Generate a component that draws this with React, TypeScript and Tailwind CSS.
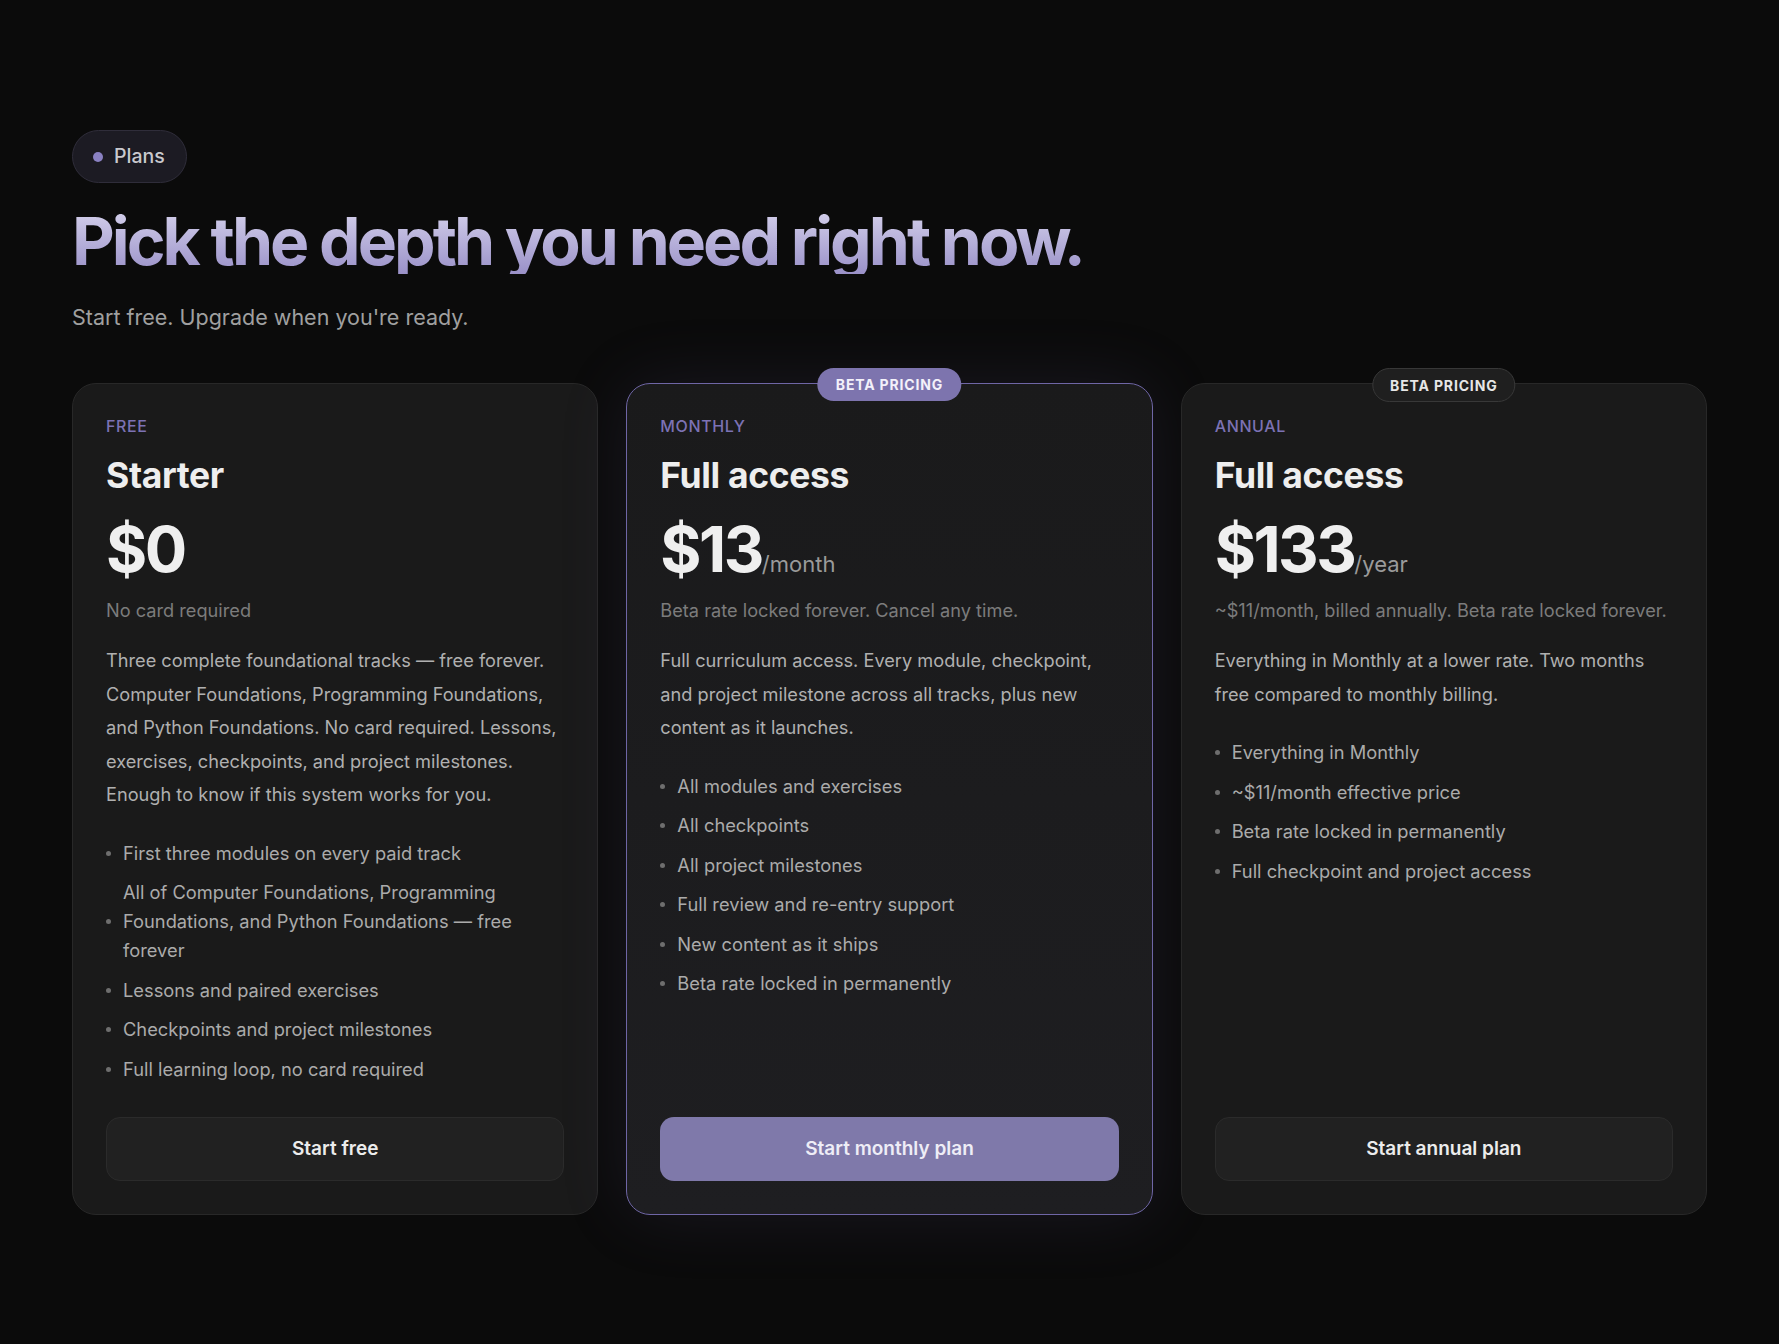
import React from "react";

type Plan = {
  label: string;
  title: string;
  price: string;
  suffix?: string;
  sub: string;
  desc: string;
  bullets: string[];
  cta: string;
  featured: boolean;
  badge: "primary" | "muted" | null;
};

const plans: Plan[] = [
  {
    label: "FREE",
    title: "Starter",
    price: "$0",
    sub: "No card required",
    desc:
      "Three complete foundational tracks — free forever. Computer Foundations, Programming Foundations, and Python Foundations. No card required. Lessons, exercises, checkpoints, and project milestones. Enough to know if this system works for you.",
    bullets: [
      "First three modules on every paid track",
      "All of Computer Foundations, Programming Foundations, and Python Foundations — free forever",
      "Lessons and paired exercises",
      "Checkpoints and project milestones",
      "Full learning loop, no card required",
    ],
    cta: "Start free",
    featured: false,
    badge: null,
  },
  {
    label: "MONTHLY",
    title: "Full access",
    price: "$13",
    suffix: "/month",
    sub: "Beta rate locked forever. Cancel any time.",
    desc:
      "Full curriculum access. Every module, checkpoint, and project milestone across all tracks, plus new content as it launches.",
    bullets: [
      "All modules and exercises",
      "All checkpoints",
      "All project milestones",
      "Full review and re-entry support",
      "New content as it ships",
      "Beta rate locked in permanently",
    ],
    cta: "Start monthly plan",
    featured: true,
    badge: "primary",
  },
  {
    label: "ANNUAL",
    title: "Full access",
    price: "$133",
    suffix: "/year",
    sub: "~$11/month, billed annually. Beta rate locked forever.",
    desc:
      "Everything in Monthly at a lower rate. Two months free compared to monthly billing.",
    bullets: [
      "Everything in Monthly",
      "~$11/month effective price",
      "Beta rate locked in permanently",
      "Full checkpoint and project access",
    ],
    cta: "Start annual plan",
    featured: false,
    badge: "muted",
  },
];

function Card({ plan }: { plan: Plan }) {
  return (
    <div
      className={
        plan.featured
          ? "relative flex flex-col rounded-[24px] border border-[#6f66a6] bg-gradient-to-b from-[#1a1a1b] to-[#1e1e21] px-[33px] pt-[32px] pb-[33px] shadow-[0_0_70px_rgba(120,110,180,0.13)]"
          : "relative flex flex-col rounded-[24px] border border-[#282828] bg-[#1a1a1a] px-[33px] pt-[32px] pb-[33px]"
      }
    >
      {plan.badge === "primary" && (
        <div className="absolute left-1/2 top-[-16px] flex h-[33px] -translate-x-1/2 items-center rounded-full bg-[#7d74ae] px-[18px] text-[14px] font-bold tracking-[0.06em] text-[#f3f1fa]">
          BETA PRICING
        </div>
      )}
      {plan.badge === "muted" && (
        <div className="absolute left-1/2 top-[-16px] flex h-[34px] -translate-x-1/2 items-center rounded-full border border-[#383838] bg-[#1f1f1f] px-[17px] text-[14px] font-bold tracking-[0.06em] text-[#e6e6e6]">
          BETA PRICING
        </div>
      )}
      <div className="text-[16px] font-medium leading-[20px] tracking-[0.04em] text-[#7c72b4]">
        {plan.label}
      </div>
      <div className="mt-[19px] text-[35.5px] font-bold leading-[42px] tracking-[-0.01em] text-[#eeeeee]">
        {plan.title}
      </div>
      <div className="mt-[21px] flex items-baseline">
        <span className="text-[63px] font-bold leading-[63px] tracking-[-0.04em] text-[#efefef]">
          {plan.price}
        </span>
        {plan.suffix && (
          <span className="text-[22px] font-normal leading-[28px] text-[#9a9a9a]">
            {plan.suffix}
          </span>
        )}
      </div>
      <div className="mt-[15px] whitespace-nowrap text-[18.2px] leading-[28px] text-[#7c7c7c]">
        {plan.sub}
      </div>
      <p className="mt-[20px] text-[18.2px] leading-[33.5px] text-[#b0b0b0]">{plan.desc}</p>
      <ul className="mt-[27px] flex flex-col gap-[10.6px]">
        {plan.bullets.map((b) => (
          <li key={b} className="flex items-center gap-[12px]">
            <span className="h-[5px] w-[5px] shrink-0 rounded-full bg-[#6e6e6e]" />
            <span className="text-[18.3px] leading-[29px] text-[#ababab]">{b}</span>
          </li>
        ))}
      </ul>
      <div className="flex-1" />
      <button
        className={
          plan.featured
            ? "mt-[33px] flex h-[64px] w-full items-center justify-center rounded-[14px] bg-[#7f79aa] text-[19px] font-semibold text-[#eeedf6]"
            : "mt-[33px] flex h-[64px] w-full items-center justify-center rounded-[14px] border border-[#2b2b2b] bg-[#212121] text-[19px] font-semibold text-[#ececec]"
        }
      >
        {plan.cta}
      </button>
    </div>
  );
}

export default function App() {
  return (
    <div className="min-h-screen bg-[#0b0b0b] px-[72px] pt-[130px] pb-[130px] font-['Inter',sans-serif] antialiased">
      <div className="inline-flex h-[53px] items-center gap-[11px] rounded-full border border-[#2f2d3a] bg-[#1c1b23] pl-[20px] pr-[21px]">
        <span className="h-[10px] w-[10px] rounded-full bg-[#8a81c2]" />
        <span className="text-[19.5px] font-medium text-[#c9c9ce]">Plans</span>
      </div>
      <h1 className="mt-[25px] bg-gradient-to-b from-[#d6d2ec] to-[#9a91c8] bg-clip-text text-[66px] font-bold leading-[66px] tracking-[-0.045em] text-transparent">
        Pick the depth you need right now.
      </h1>
      <p className="mt-[29px] text-[21.5px] leading-[28px] text-[#a0a0a0]">
        Start free. Upgrade when you&apos;re ready.
      </p>
      <div className="mt-[52px] grid grid-cols-3 gap-[28px]">
        {plans.map((p) => (
          <Card key={p.label} plan={p} />
        ))}
      </div>
    </div>
  );
}
